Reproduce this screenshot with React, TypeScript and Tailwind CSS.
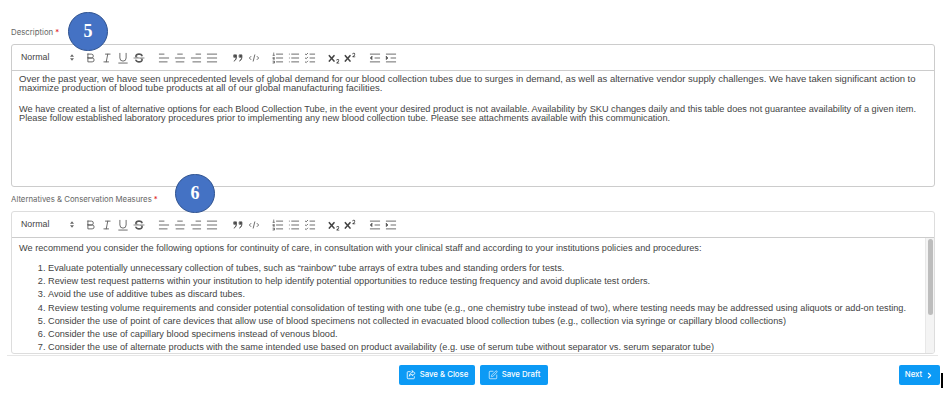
import { ChevronRight, SquarePen } from "lucide-react";
import type { ReactNode } from "react";

const sans = "font-['Liberation_Sans',Arial,sans-serif]";

function Ico({ children, className = "" }: { children: ReactNode; className?: string }) {
  return (
    <svg
      viewBox="0 0 18 18"
      className={`w-[14px] h-[14px] ${className}`}
      fill="none"
      stroke="#555"
      strokeWidth="1.1"
      strokeLinecap="round"
      strokeLinejoin="round"
    >
      {children}
    </svg>
  );
}

function Btn({ children }: { children: ReactNode }) {
  return <span className="w-4 flex justify-center items-center">{children}</span>;
}

function Toolbar() {
  return (
    <div className={`h-[26px] flex items-center pl-[9px] border-b border-[#ccc] ${sans}`}>
      {/* header picker */}
      <div className="w-[62px] flex items-center justify-between pr-[9px] text-[8.8px] font-medium text-[#444]">
        <span>Normal</span>
        <svg viewBox="0 0 6 10" className="w-[4px] h-[7px]" fill="#666">
          <path d="M3 0 6 4H0ZM3 10 0 6H6Z" />
        </svg>
      </div>
      <div className="flex">
        <Btn>
          <Ico>
            <path d="M5,4H9.5A2.5,2.5,0,0,1,12,6.5v0A2.5,2.5,0,0,1,9.5,9H5V4Z" />
            <path d="M5,9h5.5A2.5,2.5,0,0,1,13,11.5v0A2.5,2.5,0,0,1,10.5,14H5V9Z" />
          </Ico>
        </Btn>
        <Btn>
          <Ico>
            <line x1="7" x2="13" y1="4" y2="4" />
            <line x1="5" x2="11" y1="14" y2="14" />
            <line x1="8" x2="10" y1="14" y2="4" />
          </Ico>
        </Btn>
        <Btn>
          <Ico>
            <path d="M5,3V9a4,4,0,0,0,4,4H9a4,4,0,0,0,4-4V3" />
            <line x1="3.5" x2="14.5" y1="15.5" y2="15.5" />
          </Ico>
        </Btn>
        <Btn>
          <Ico>
            <line x1="15.5" x2="2.5" y1="9" y2="9" strokeWidth="0.9" />
            <path stroke="none" fill="#555" d="M9.007,8C6.542,7.791,6,7.519,6,6.5,6,5.792,7.283,5,9,5c1.571,0,2.765.679,2.969,1.309a1,1,0,0,0,1.9-.617C13.356,4.106,11.354,3,9,3,6.2,3,4,4.538,4,6.5a3.2,3.2,0,0,0,.5,1.843Z" />
            <path stroke="none" fill="#555" d="M8.984,10C11.457,10.208,12,10.479,12,11.5c0,.708-1.283,1.5-3,1.5-1.571,0-2.765-.679-2.969-1.309a1,1,0,1,0-1.9.617C4.644,13.894,6.646,15,9,15c2.8,0,5-1.538,5-3.5a3.2,3.2,0,0,0-.5-1.843Z" />
          </Ico>
        </Btn>
      </div>
      <div className="flex ml-[9px]">
        <Btn>
          <Ico>
            <line x1="3" x2="15" y1="9" y2="9" />
            <line x1="3" x2="13" y1="14" y2="14" />
            <line x1="3" x2="9" y1="4" y2="4" />
          </Ico>
        </Btn>
        <Btn>
          <Ico>
            <line x1="15" x2="3" y1="9" y2="9" />
            <line x1="14" x2="4" y1="14" y2="14" />
            <line x1="12" x2="6" y1="4" y2="4" />
          </Ico>
        </Btn>
        <Btn>
          <Ico>
            <line x1="15" x2="3" y1="9" y2="9" />
            <line x1="15" x2="5" y1="14" y2="14" />
            <line x1="15" x2="9" y1="4" y2="4" />
          </Ico>
        </Btn>
        <Btn>
          <Ico>
            <line x1="15" x2="3" y1="9" y2="9" />
            <line x1="15" x2="3" y1="14" y2="14" />
            <line x1="15" x2="3" y1="4" y2="4" />
          </Ico>
        </Btn>
      </div>
      <div className="flex ml-[10px]">
        <Btn>
          <Ico>
            <rect fill="#444" height="3" width="3" x="4" y="5" />
            <rect fill="#444" height="3" width="3" x="11" y="5" />
            <path fill="#444" d="M7,8c0,4.031-3,5-3,5" />
            <path fill="#444" d="M14,8c0,4.031-3,5-3,5" />
          </Ico>
        </Btn>
        <Btn>
          <Ico>
            <polyline points="5 7 3 9 5 11" />
            <polyline points="13 7 15 9 13 11" />
            <line x1="10" x2="8" y1="5" y2="13" />
          </Ico>
        </Btn>
      </div>
      <div className="flex ml-[8px]">
        <Btn>
          <Ico>
            <line x1="7" x2="15" y1="4" y2="4" />
            <line x1="7" x2="15" y1="9" y2="9" />
            <line x1="7" x2="15" y1="14" y2="14" />
            <line x1="2.5" x2="4.5" y1="5.5" y2="5.5" strokeWidth="0.9" />
            <line x1="3.5" x2="3.5" y1="2.5" y2="5.5" strokeWidth="0.9" />
            <path strokeWidth="0.9" d="M2.5,8.5h2v1h-2v1h2" />
            <path strokeWidth="0.9" d="M2.5,13h2v2.5h-2M3,14.2h1.5" />
          </Ico>
        </Btn>
        <Btn>
          <Ico>
            <line x1="6" x2="15" y1="4" y2="4" />
            <line x1="6" x2="15" y1="9" y2="9" />
            <line x1="6" x2="15" y1="14" y2="14" />
            <line x1="3" x2="3" y1="4" y2="4" />
            <line x1="3" x2="3" y1="9" y2="9" />
            <line x1="3" x2="3" y1="14" y2="14" />
          </Ico>
        </Btn>
        <Btn>
          <Ico>
            <line x1="9" x2="15" y1="4" y2="4" />
            <polyline points="3 4 4 5 6 3" />
            <line x1="9" x2="15" y1="14" y2="14" />
            <polyline points="3 14 4 15 6 13" />
            <line x1="9" x2="15" y1="9" y2="9" />
            <polyline points="3 9 4 10 6 8" />
          </Ico>
        </Btn>
      </div>
      <div className="flex ml-[8px]">
        <Btn>
          <Ico>
            <path stroke="none" fill="#444" d="M15.5,15H13.861a3.858,3.858,0,0,0,1.914-2.975,1.8,1.8,0,0,0-1.6-1.751A1.921,1.921,0,0,0,12.021,11.7a.5,.5,0,1,0,.957.291,.914,.914,0,0,1,1.053-.725,.81,.81,0,0,1,.744.762c0,1.076-1.17,1.87-1.94,2.43A1.456,1.456,0,0,0,12,15.5a.5,.5,0,0,0,.5.5h3A.5,.5,0,0,0,15.5,15Z" />
            <path stroke="none" fill="#444" d="M9.65,5.241a1,1,0,0,0-1.409.108L6,7.964,3.759,5.349a1,1,0,1,0-1.519,1.3L4.684,9.5,2.241,12.35a1,1,0,1,0,1.519,1.3L6,11.036l2.241,2.614a1,1,0,0,0,1.519-1.3L7.316,9.5,9.759,6.651A1,1,0,0,0,9.65,5.241Z" />
          </Ico>
        </Btn>
        <Btn>
          <Ico>
            <path stroke="none" fill="#444" d="M15.5,7H13.861a4.015,4.015,0,0,0,1.914-2.975,1.8,1.8,0,0,0-1.6-1.751A1.922,1.922,0,0,0,12.021,3.7a.5,.5,0,1,0,.957.291,.917,.917,0,0,1,1.053-.725,.81,.81,0,0,1,.744.762c0,1.077-1.164,1.925-1.934,2.486A1.423,1.423,0,0,0,12,7.5a.5,.5,0,0,0,.5.5h3A.5,.5,0,0,0,15.5,7Z" />
            <path stroke="none" fill="#444" d="M9.651,5.241a1,1,0,0,0-1.41.108L6,7.964,3.759,5.349a1,1,0,1,0-1.519,1.3L4.683,9.5,2.241,12.35a1,1,0,1,0,1.519,1.3L6,11.036l2.241,2.614a1,1,0,0,0,1.519-1.3L7.317,9.5,9.759,6.651A1,1,0,0,0,9.651,5.241Z" />
          </Ico>
        </Btn>
      </div>
      <div className="flex ml-[9px]">
        <Btn>
          <Ico>
            <line x1="3" x2="15" y1="14" y2="14" />
            <line x1="3" x2="15" y1="4" y2="4" />
            <line x1="9" x2="15" y1="9" y2="9" />
            <polyline fill="#444" points="5 7 5 11 3 9 5 7" />
          </Ico>
        </Btn>
        <Btn>
          <Ico>
            <line x1="3" x2="15" y1="14" y2="14" />
            <line x1="3" x2="15" y1="4" y2="4" />
            <line x1="9" x2="15" y1="9" y2="9" />
            <polyline fill="#444" points="3 7 3 11 5 9 3 7" />
          </Ico>
        </Btn>
      </div>
    </div>
  );
}

const items = [
  "Evaluate potentially unnecessary collection of tubes, such as “rainbow” tube arrays of extra tubes and standing orders for tests.",
  "Review test request patterns within your institution to help identify potential opportunities to reduce testing frequency and avoid duplicate test orders.",
  "Avoid the use of additive tubes as discard tubes.",
  "Review testing volume requirements and consider potential consolidation of testing with one tube (e.g., one chemistry tube instead of two), where testing needs may be addressed using aliquots or add-on testing.",
  "Consider the use of point of care devices that allow use of blood specimens not collected in evacuated blood collection tubes (e.g., collection via syringe or capillary blood collections)",
  "Consider the use of capillary blood specimens instead of venous blood.",
  "Consider the use of alternate products with the same intended use based on product availability (e.g. use of serum tube without separator vs. serum separator tube)",
];

function Label({ text }: { text: string }) {
  return (
    <div className="h-[12px] mb-[5px] ml-[11px] flex items-center text-[7.8px] text-[#666] font-['Inter',sans-serif]">
      {text}
      <span className="text-[#e02020] ml-[2px]">*</span>
    </div>
  );
}

function Badge({ n, className }: { n: string; className: string }) {
  return (
    <div
      className={`absolute w-[40px] h-[39px] rounded-full bg-[#4472c4] border border-[#2f528f] flex items-center justify-center text-white text-[18px] font-bold font-['Liberation_Serif',serif] ${className}`}
    >
      {n}
    </div>
  );
}

function ShareSquare() {
  return (
    <svg viewBox="0 0 12 12" className="w-[10px] h-[10px]" fill="none" stroke="currentColor" strokeWidth="1" strokeLinecap="round" strokeLinejoin="round">
      <path d="M5 2H2.5A1 1 0 0 0 1.500 3v6.500a1 1 0 0 0 1 1H9a1 1 0 0 0 1-1V8" />
      <path d="M7.500 1 11 4 7.500 7V5.300C5.500 5.300 4.500 6 4 7.500 4 5 5.500 3 7.500 2.800Z" />
    </svg>
  );
}

export default function App() {
  return (
    <div className="relative w-[949px] h-[400px] bg-white overflow-hidden">
      <div className="pt-[27px]">
        <Label text="Description" />
        <div className="ml-[11px] w-[924px] h-[143px] border border-[#ccc] rounded-[3px]">
          <Toolbar />
          <div className={`pl-[7px] pr-[8px] pt-[2px] text-[9.5px] leading-[9px] text-[#444] ${sans}`}>
            <p className="pt-[1px]">
              Over the past year, we have seen unprecedented levels of global demand for our blood collection tubes due to surges in demand, as well as alternative vendor supply challenges. We have taken significant action to maximize production of blood tube products at all of our global manufacturing facilities.
            </p>
            <p className="mt-[13px] text-[9.2px]">
              We have created a list of alternative options for each Blood Collection Tube, in the event your desired product is not available. Availability by SKU changes daily and this table does not guarantee availability of a given item. Please follow established laboratory procedures prior to implementing any new blood collection tube. Please see attachments available with this communication.
            </p>
          </div>
        </div>

        <div className="mt-[7px]">
          <Label text="Alternatives & Conservation Measures" />
        </div>
        <div className="relative ml-[11px] w-[924px] h-[143px] border border-[#ddd] rounded-[3px] overflow-hidden">
          <Toolbar />
          <div className={`pl-[7px] pr-[10px] pt-[5px] text-[9.2px] text-[#444] ${sans}`}>
            <p className="leading-[10px]">
              We recommend you consider the following options for continuity of care, in consultation with your clinical staff and according to your institutions policies and procedures:
            </p>
            <ol className="mt-[9px] pl-[29px] list-decimal leading-[13.2px]">
              {items.map((t) => (
                <li key={t}>{t}</li>
              ))}
            </ol>
          </div>
          {/* scrollbar */}
          <div className="absolute top-[26px] right-0 bottom-0 w-[9px] bg-[#f4f4f4] border-l border-[#e8e8e8]">
            <div className="mx-auto mt-[1px] w-[5px] h-[76px] rounded-[3px] bg-[#bdbdbd]" />
          </div>
        </div>
      </div>

      <div className="ml-[7px] w-[931px] mt-[1px] border-t border-[#e6e6e6]" />

      <div className="flex mt-[9px] ml-[399px] pr-[9px] font-['Inter',sans-serif] text-[7.8px] font-medium text-white">
        <div className="flex gap-[5px]">
          <button className="h-[20px] w-[76px] rounded-[2px] bg-[#0c9af5] flex items-center justify-center gap-[4px]">
            <ShareSquare />
            Save &amp; Close
          </button>
          <button className="h-[20px] w-[68px] rounded-[2px] bg-[#0c9af5] flex items-center justify-center gap-[4px]">
            <SquarePen size={10} strokeWidth={1.6} />
            Save Draft
          </button>
        </div>
        <button className="ml-auto h-[20px] w-[41px] rounded-[2px] bg-[#0c9af5] flex items-center justify-center gap-[3px]">
          Next
          <ChevronRight size={9} strokeWidth={3} />
        </button>
      </div>

      {/* callouts laid over the form */}
      <Badge n="5" className="left-[68px] top-[12px]" />
      <Badge n="6" className="left-[175px] top-[174px]" />
      <div className="absolute left-[941px] top-[373px] w-[2px] h-[15px] bg-black" />
    </div>
  );
}
